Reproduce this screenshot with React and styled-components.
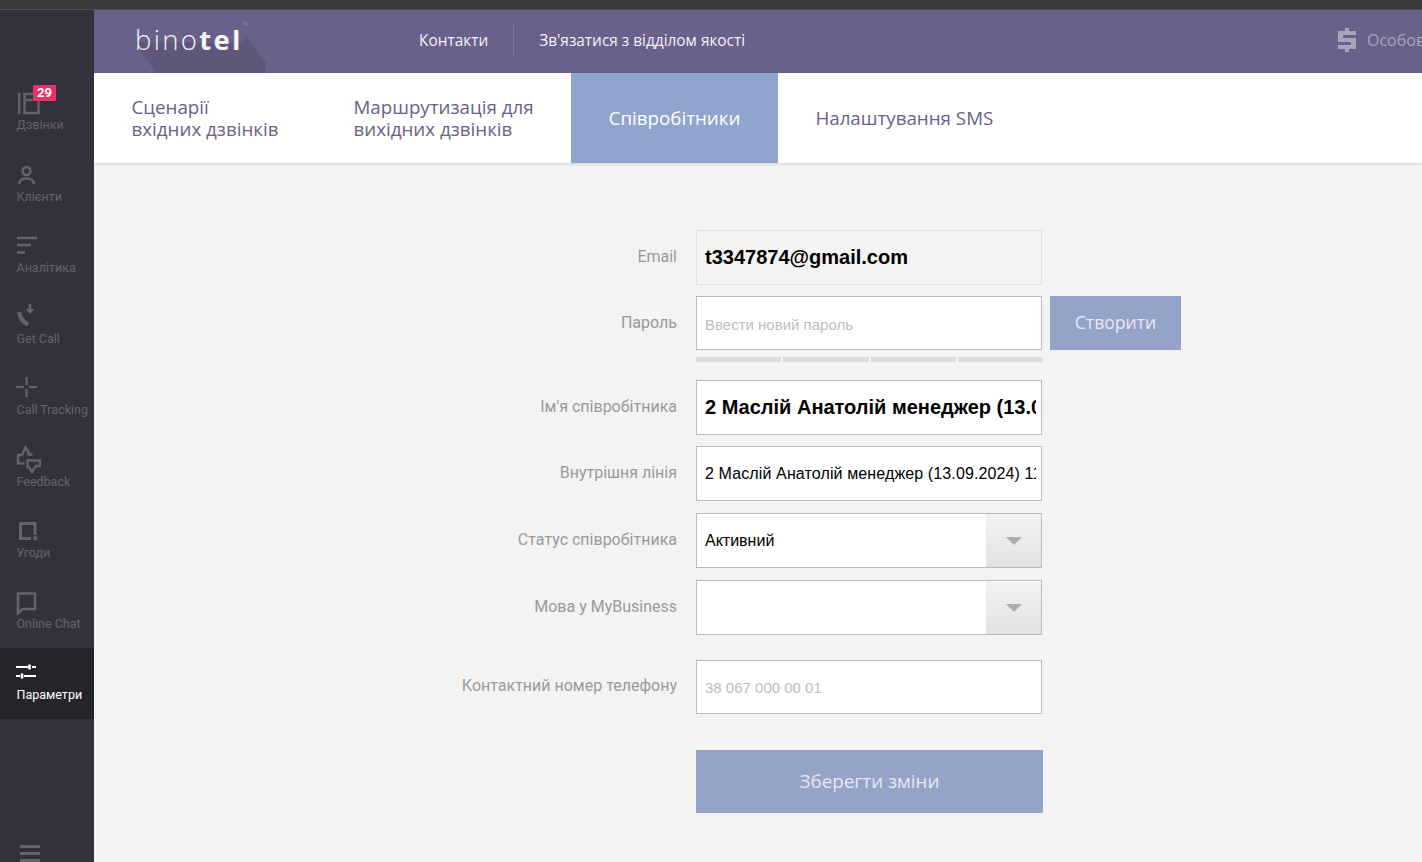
import React from "react";
import styled, { createGlobalStyle } from "styled-components";

const Global = createGlobalStyle`
  html, body { margin: 0; padding: 0; height: 100%; overflow: hidden; background: #f3f3f3; }
  * { box-sizing: border-box; }
  input::placeholder { color: #bdbdbd; opacity: 1; }
`;

const Page = styled.div`
  width: 1422px; height: 862px; overflow: hidden;
  display: flex; flex-direction: column;
  font-family: "Open Sans", sans-serif;
`;
const TopStrip = styled.div`
  height: 10px; flex: none; background: #3b3b3b; border-bottom: 1px solid #4d4d4d;
`;
const Body = styled.div`
  flex: 1; display: flex; min-height: 0;
`;
const Sidebar = styled.nav`
  width: 94px; flex: none; background: #33323c;
  padding-top: 70px; display: flex; flex-direction: column; position: relative;
`;
const NavItem = styled.div`
  height: 71px; flex: none; position: relative; padding-left: 16.5px;
  background: ${p => (p.$active ? "#25242b" : "transparent")};
  color: ${p => (p.$active ? "#ffffff" : "#64636a")};
  font: 12.5px/14px Roboto, sans-serif; white-space: nowrap;
`;
const NavIcon = styled.svg`
  display: block; width: 28px; height: 40px; margin-left: -1.5px;
  fill: none; stroke: ${p => (p.$active ? "#ffffff" : "#64636a")}; stroke-width: 2.4;
`;
const NavLabel = styled.span`
  display: block; margin-top: ${p => -(p.$up || 0)}px;
`;
const Badge = styled.span`
  position: absolute; left: 33px; top: 5px; width: 23px; height: 16px;
  background: #ef2f66; color: #fff; border-radius: 1px;
  font: 700 13px/16px Roboto, sans-serif; text-align: center;
`;
const Burger = styled.div`
  position: absolute; left: 20px; top: 835px; width: 20px; height: 17px;
  display: flex; flex-direction: column; gap: 4px;
`;
const BurgerLine = styled.i`
  display: block; height: 3px; background: #64636a;
`;

const Main = styled.div`
  flex: 1; min-width: 0; display: flex; flex-direction: column;
`;
const Header = styled.header`
  height: 63px; flex: none; background: #6a618a; position: relative;
  display: flex; align-items: center; padding: 0 0 3px 325px; color: #fff;
  font-size: 15.4px; overflow: hidden;
`;
const LogoShadow = styled.svg`
  position: absolute; left: 40px; top: 0; width: 140px; height: 63px;
`;
const Logo = styled.div`
  position: absolute; left: 41px; top: 10px;
  font: 300 27.5px/40px "Open Sans", sans-serif; letter-spacing: 2.3px; color: #f4f3f6;
  b { font-weight: 700; }
  sup { font-size: 6px; position: absolute; top: -3px; right: -5px; letter-spacing: 0; line-height: 14px; color: #b8b3c8; }
`;
const HeaderLink = styled.a`
  color: #f3f2f6; white-space: nowrap;
`;
const HeaderDivider = styled.span`
  width: 1px; height: 32px; background: #8078a0; margin: 0 25px;
`;
const Account = styled.div`
  position: absolute; left: 1244px; top: 0; height: 100%; padding-bottom: 4px;
  display: flex; align-items: center; gap: 11px; color: #a9a4bc; white-space: nowrap;
  font-size: 16px;
`;

const Tabs = styled.div`
  height: 90px; flex: none; background: #fff; display: flex;
  box-shadow: 0 1px 3px rgba(0,0,0,.14); position: relative;
`;
const Tab = styled.div`
  padding: 0 37.5px; display: flex; align-items: center;
  font-size: 18.75px; line-height: 22px; white-space: pre-line;
  background: ${p => (p.$active ? "#90a4cd" : "transparent")};
  color: ${p => (p.$active ? "#ffffff" : "#6a618a")};
`;

const Form = styled.div`
  flex: 1; padding-top: 67px; display: flex; flex-direction: column; background: #f3f3f3;
`;
const Row = styled.div`
  display: flex; align-items: center; margin-top: ${p => p.$mt || 0}px;
`;
const Label = styled.label`
  width: 584px; flex: none; padding-right: 1px; text-align: right;
  font: 16px/20px Roboto, sans-serif; color: #9a9a9a; margin-top: ${p => p.$mt ?? -1}px;
`;
const FieldWrap = styled.div`
  margin-left: 18px; width: 346px; flex: none;
`;
const Input = styled.input`
  display: block; width: 100%; height: ${p => p.$h || 55}px; padding: 0 5px 0 8px;
  border: 1px solid ${p => (p.$disabled ? "#e0e0e0" : "#bcbcbc")};
  background: ${p => (p.$disabled ? "#f3f3f3" : "#fff")};
  color: #000; outline: none; border-radius: 0;
  font-family: "Liberation Sans", Arial, sans-serif;
  font-size: ${p => p.$fs || 16}px; font-weight: ${p => (p.$bold ? 700 : 400)};
  letter-spacing: ${p => (p.$bold ? 0 : 0.12)}px;
`;
const PlainInput = styled(Input)`
  font-size: 15px; letter-spacing: 0; padding-top: ${p => p.$pt ?? 2}px;
`;
const Create = styled.button`
  width: 131px; height: 54px; margin-left: 8px; border: 0; background: #95a3c8; color: #e6e9f2;
  font: 17.6px "Open Sans", sans-serif; padding: 0 0 2px;
`;
const Strength = styled.div`
  display: flex; gap: 2px; width: 347px; margin: 7px 0 0 602px; height: 5px;
`;
const StrengthBar = styled.i`
  flex: 1; background: #dcdbd9;
`;
const Select = styled.div`
  display: flex; height: 55px; border: 1px solid #bcbcbc; background: #fff;
  font: 16px "Liberation Sans", Arial, sans-serif; color: #000;
`;
const SelectValue = styled.div`
  flex: 1; padding: 0 8px; display: flex; align-items: center;
`;
const SelectArrow = styled.div`
  width: 55px; flex: none; display: flex; align-items: center; justify-content: center;
  background: linear-gradient(#f3f3f3, #e2e2e2);
  &::after {
    content: ""; border-style: solid; border-width: 8px 8px 0; border-color: #adadad transparent transparent;
  }
`;
const Save = styled.button`
  display: block; width: 347px; height: 63px; margin: 36px 0 0 602px; border: 0; padding: 0 0 2px;
  background: #95a3c8; color: #e6e9f2; font: 18.8px "Open Sans", sans-serif;
`;

const Icon = ({ active, children, ...rest }) => (
  <NavIcon $active={active} viewBox="0 0 28 40" {...rest}>{children}</NavIcon>
);

const navItems = [
  { label: "Дзвінки", badge: "29", up: 2, icon: <><path d="M4.2 13v21" /><path d="M9.5 14h14v19H9.5z" /><path d="M9.5 20h8" /></> },
  { label: "Клієнти", up: 1, icon: <><circle cx="11.5" cy="20" r="4" /><path d="M4 33c.5-4 3.5-5.6 7.5-5.6s7 1.6 7.5 5.6" /></> },
  { label: "Аналітика", up: 1, icon: <path d="M2 16h20M2 23h14M2 30.5h8" strokeWidth="2.6" /> },
  { label: "Get Call", up: 1, icon: <><path d="M4 19c1 6 4 10 9 12.5" strokeWidth="4.4" /><path d="M15 11v8M11.8 16l3.2 3.2 3.2-3.2" /></> },
  { label: "Call Tracking", up: 1, icon: <path d="M11.5 13v8M11.5 25v8M1 23h8M14 23h8" strokeWidth="2.2" /> },
  { label: "Feedback", icon: <><path d="M9.5 28.5H3V20h4l3.5-7.5 3 4.5v2.5h4" /><path d="M12.5 25.5H25V31h-4l-4 6-3-5h-1.5z" /></> },
  { label: "Угоди", icon: <><path d="M20 29V17.5H5.5V32.5H16" strokeWidth="3" /><rect x="18.5" y="30.5" width="3.6" height="3.6" fill="#64636a" stroke="none" /></> },
  { label: "Online Chat", icon: <path d="M3 36V16.5h17v15.5H7.5z" strokeWidth="2.6" /> },
];

export default function App() {
  return (
    <Page>
      <Global />
      <TopStrip />
      <Body>
        <Sidebar>
          {navItems.map(it => (
            <NavItem key={it.label}>
              <Icon>{it.icon}</Icon>
              {it.badge && <Badge>{it.badge}</Badge>}
              <NavLabel $up={it.up}>{it.label}</NavLabel>
            </NavItem>
          ))}
          <NavItem $active>
            <Icon active>
              <path d="M1 19h12M17 19h4M1 28h4M9 28h12" strokeWidth="2" />
              <path d="M14.5 16.5v5M7 25.5v5" strokeWidth="2.6" />
            </Icon>
            <NavLabel>Параметри</NavLabel>
          </NavItem>
          <Burger><BurgerLine /><BurgerLine /><BurgerLine /></Burger>
        </Sidebar>
        <Main>
          <Header>
            <LogoShadow viewBox="0 0 140 63">
              <path d="M1 32L22 63H132V53L112 25l-2 8z" fill="#5f5779" />
            </LogoShadow>
            <Logo>bino<b>tel</b><sup>®</sup></Logo>
            <HeaderLink>Контакти</HeaderLink>
            <HeaderDivider />
            <HeaderLink>Зв'язатися з відділом якості</HeaderLink>
            <Account>
              <svg width="18" height="24" viewBox="0 0 18 24" fill="#a9a4bc">
                <path d="M7 0h4v3h7v4H5v3h13v11h-7v3H7v-3H0v-4h13v-3H0V3h7z" />
              </svg>
              Особовий кабінет
            </Account>
          </Header>
          <Tabs>
            <Tab>{"Сценарії\nвхідних дзвінків"}</Tab>
            <Tab>{"Маршрутизація для\nвихідних дзвінків"}</Tab>
            <Tab $active>Співробітники</Tab>
            <Tab>Налаштування SMS</Tab>
          </Tabs>
          <Form>
            <Row>
              <Label>Email</Label>
              <FieldWrap><Input readOnly $disabled $bold $fs={20} value="t3347874@gmail.com" /></FieldWrap>
            </Row>
            <Row $mt={11}>
              <Label>Пароль</Label>
              <FieldWrap><PlainInput $h={54} placeholder="Ввести новий пароль" readOnly /></FieldWrap>
              <Create>Створити</Create>
            </Row>
            <Strength><StrengthBar /><StrengthBar /><StrengthBar /><StrengthBar /></Strength>
            <Row $mt={18}>
              <Label>Ім'я співробітника</Label>
              <FieldWrap><Input readOnly $bold $fs={20} value="2 Маслій Анатолій менеджер (13.09.2024) 11" /></FieldWrap>
            </Row>
            <Row $mt={11}>
              <Label>Внутрішня лінія</Label>
              <FieldWrap><Input readOnly value="2 Маслій Анатолій менеджер (13.09.2024) 11" /></FieldWrap>
            </Row>
            <Row $mt={12}>
              <Label>Статус співробітника</Label>
              <FieldWrap><Select><SelectValue>Активний</SelectValue><SelectArrow /></Select></FieldWrap>
            </Row>
            <Row $mt={12}>
              <Label>Мова у MyBusiness</Label>
              <FieldWrap><Select><SelectValue /><SelectArrow /></Select></FieldWrap>
            </Row>
            <Row $mt={25}>
              <Label $mt={-3}>Контактний номер телефону</Label>
              <FieldWrap><PlainInput $h={54} $pt={0} placeholder="38 067 000 00 01" readOnly /></FieldWrap>
            </Row>
            <Save>Зберегти зміни</Save>
          </Form>
        </Main>
      </Body>
    </Page>
  );
}
